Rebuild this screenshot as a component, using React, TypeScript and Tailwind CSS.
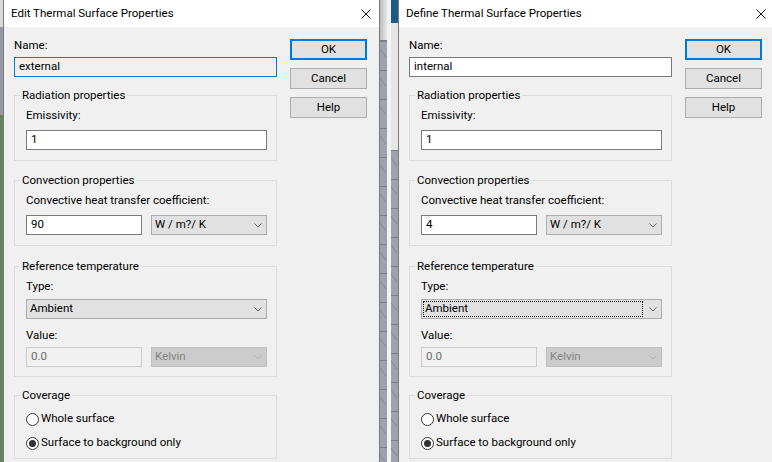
import React from 'react';

const CloseIcon = () => (
    <svg width="10" height="10" viewBox="0 0 10 10" className="shrink-0">
        <path d="M0.5 0.5 L9.5 9.5 M9.5 0.5 L0.5 9.5" stroke="#1a1a1a" strokeWidth="1" fill="none"/>
    </svg>
);

const Chevron = ({disabled}: { disabled?: boolean }) => (
    <svg width="8" height="5" viewBox="0 0 8 5">
        <path d="M0.5 0.5 L4 4 L7.5 0.5" stroke={disabled ? '#b4b4b4' : '#606060'} strokeWidth="1" fill="none"/>
    </svg>
);

// background app peeking between / beside the dialogs
const Hatch = ({id, className}: { id: string; className: string }) => (
    <svg className={className} preserveAspectRatio="none">
        <defs>
            <pattern id={id} width="7" height="29" patternUnits="userSpaceOnUse">
                <rect width="7" height="29" fill="#9ea2ae"/>
                <line x1="0" y1="0.5" x2="7" y2="0.5" stroke="#7d818c"/>
                <line x1="0" y1="8" x2="6" y2="16" stroke="#80838e" strokeWidth="0.8"/>
            </pattern>
        </defs>
        <rect width="100%" height="100%" fill={`url(#${id})`}/>
    </svg>
);

interface ComboProps {
    value: string;
    className: string;
    disabled?: boolean;
    focused?: boolean;
}

const Combo = ({value, className, disabled, focused}: ComboProps) => (
    <div
        className={`flex h-[20px] items-center border ${
            disabled ? 'border-[#bfbfbf] bg-[#cccccc] text-[#838383]' : 'border-[#adadad] bg-[#e1e1e1] text-black'
        } ${className}`}
    >
        {focused ? (
            <div className="m-[1px] flex h-[16px] flex-1 items-center border border-dotted border-black pl-[1px]">
                {value}
            </div>
        ) : (
            <div className="flex-1 pl-[3px]">{value}</div>
        )}
        <div className="flex w-[17px] justify-center">
            <Chevron disabled={disabled}/>
        </div>
    </div>
);

const Group = ({title, className, children}: { title: string; className: string; children: React.ReactNode }) => (
    <div className={`flex flex-col border border-[#dcdcdc] pl-[11px] pr-[9px] ${className}`}>
        <div className="-mt-[9px] -ml-[6px] w-fit bg-[#f0f0f0] px-[2px] leading-[16px]">{title}</div>
        {children}
    </div>
);

const Radio = ({label, checked, className}: { label: string; checked?: boolean; className: string }) => (
    <div className={`flex h-[16px] items-center gap-[2px] ${className}`}>
        <div className="flex h-[13px] w-[13px] items-center justify-center rounded-full border border-[#333333] bg-white">
            {checked && <div className="h-[7px] w-[7px] rounded-full bg-[#333333]"/>}
        </div>
        <span>{label}</span>
    </div>
);

interface DialogProps {
    title: string;
    name: string;
    nameFocused?: boolean;
    coefficient: string;
    typeFocused?: boolean;
}

const Dialog = ({title, name, nameFocused, coefficient, typeFocused}: DialogProps) => (
    <div className="flex h-[462px] w-[377px] shrink-0 flex-col border-x border-[#7a7a7a] bg-[#f0f0f0]">
        {/* Title bar */}
        <div className="flex h-[27px] shrink-0 items-center justify-between bg-white pl-[7px] pr-[8px]">
            <span>{title}</span>
            <CloseIcon/>
        </div>

        <div className="flex gap-[13px] pl-[10px] pr-[12px]">
            {/* Form column */}
            <div className="flex w-[263px] flex-col pt-[10px]">
                <div className="leading-[16px]">Name:</div>
                <div
                    className={`mt-[4px] flex h-[20px] items-center border pl-[4px] ${
                        nameFocused ? 'border-[#0078d7] bg-[#f0f0f0]' : 'border-[#7a7a7a] bg-white'
                    }`}
                >
                    {name}
                </div>

                <Group title="Radiation properties" className="mt-[18px] pb-[10px]">
                    <div className="mt-[4px] leading-[16px]">Emissivity:</div>
                    <div className="mt-[7px] flex h-[20px] items-center border border-[#7a7a7a] bg-white pl-[4px]">1</div>
                </Group>

                <Group title="Convection properties" className="mt-[19px] pb-[10px]">
                    <div className="mt-[4px] leading-[16px]">Convective heat transfer coefficient:</div>
                    <div className="mt-[7px] flex gap-[9px]">
                        <div className="flex h-[20px] w-[116px] items-center border border-[#7a7a7a] bg-white pl-[4px]">
                            {coefficient}
                        </div>
                        <Combo value="W / m?/ K" className="w-[116px]"/>
                    </div>
                </Group>

                <Group title="Reference temperature" className="mt-[20px] pb-[9px]">
                    <div className="mt-[4px] leading-[16px]">Type:</div>
                    <Combo value="Ambient" className="mt-[5px] w-full" focused={typeFocused}/>
                    <div className="mt-[8px] leading-[16px]">Value:</div>
                    <div className="mt-[4px] flex gap-[9px]">
                        <div className="flex h-[20px] w-[116px] items-center border border-[#cccccc] bg-[#f0f0f0] pl-[4px] text-[#6d6d6d]">
                            0.0
                        </div>
                        <Combo value="Kelvin" className="w-[116px]" disabled/>
                    </div>
                </Group>

                <Group title="Coverage" className="mt-[18px] pb-[7px]">
                    <Radio label="Whole surface" className="mt-[8px]"/>
                    <Radio label="Surface to background only" checked className="mt-[8px]"/>
                </Group>
            </div>

            {/* Buttons */}
            <div className="flex w-[77px] flex-col gap-[8px] pt-[12px]">
                <button className="flex h-[21px] items-center justify-center border-2 border-[#0078d7] bg-[#e1e1e1]">OK</button>
                <button className="flex h-[21px] items-center justify-center border border-[#adadad] bg-[#e1e1e1]">Cancel</button>
                <button className="flex h-[21px] items-center justify-center border border-[#adadad] bg-[#e1e1e1]">Help</button>
            </div>
        </div>
    </div>
);

export default function App() {
    return (
        <div className="flex h-[462px] w-[772px] overflow-hidden bg-[#f0f0f0] font-['Roboto',sans-serif] text-[11.5px] text-black">
            {/* left edge of background window */}
            <div className="flex w-[3px] shrink-0 flex-col">
                <div className="h-[27px] bg-[#d9d9d9]"/>
                <div className="h-[88px] bg-[#9599a5]"/>
                <div className="flex-1 bg-[#62835c]"/>
            </div>

            <Dialog title="Edit Thermal Surface Properties" name="external" nameFocused coefficient="90"/>

            {/* gap between dialogs */}
            <div className="flex w-[18px] shrink-0">
                <div className="flex w-[7px] flex-col">
                    <div className="h-[40px] bg-gradient-to-r from-[#bcbcbc] to-[#e9e9e9]"/>
                    <div className="h-px bg-[#7a7a7a]"/>
                    <Hatch id="hatchA" className="w-[7px] flex-1"/>
                </div>
                <div className="w-[4px] bg-[#f3f3f3]"/>
                <div className="flex w-[7px] flex-col">
                    <div className="h-[23px] bg-[#1d5b87]"/>
                    <div className="h-[127px] bg-[#e6e6e6]"/>
                    <Hatch id="hatchB" className="w-[7px] flex-1"/>
                </div>
            </div>

            <Dialog title="Define Thermal Surface Properties" name="internal" coefficient="4" typeFocused/>
        </div>
    );
}
